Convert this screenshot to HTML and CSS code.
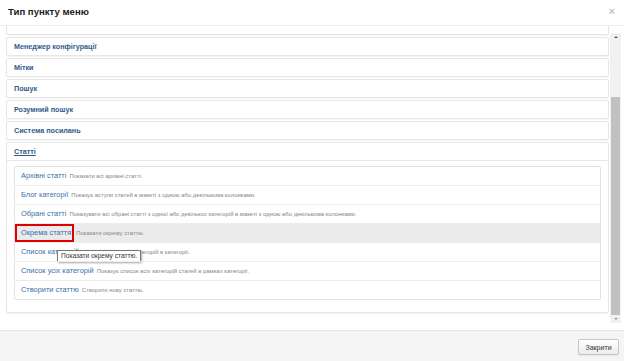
FILE: index.html
```html
<!DOCTYPE html>
<html lang="uk">
<head>
    <meta charset="UTF-8">
    <meta name="viewport" content="width=device-width, initial-scale=1.0">
    <title>Тип пункту меню</title>
    <link rel="stylesheet" href="styles.css">
</head>
<body>
    <div class="modal">
        <div class="modal-header">
            <h3>Тип пункту меню</h3>
            <a href="javascript:;" class="close" title="Закрити">&times;</a>
        </div>

        <div class="modal-body">
            <div class="accordion">
                <div class="panel panel-cut"></div>
                <div class="panel"><a href="javascript:;" class="panel-title">Менеджер конфігурації</a></div>
                <div class="panel"><a href="javascript:;" class="panel-title">Мітки</a></div>
                <div class="panel"><a href="javascript:;" class="panel-title">Пошук</a></div>
                <div class="panel"><a href="javascript:;" class="panel-title">Розумний пошук</a></div>
                <div class="panel"><a href="javascript:;" class="panel-title">Система посилань</a></div>
                <div class="panel open">
                    <a href="javascript:;" class="panel-title">Статті</a>
                    <div class="panel-body">
                        <ul class="types">
                            <li><a href="javascript:;">Архівні статті</a> <small>Показати всі архівні статті.</small></li>
                            <li><a href="javascript:;">Блог категорії</a> <small>Показує вступи статей в макеті з одною або декількома колонками.</small></li>
                            <li><a href="javascript:;">Обрані статті</a> <small>Показувати всі обрані статті з однієї або декількох категорій в макеті з одною або декількома колонками.</small></li>
                            <li class="hover"><a href="javascript:;" class="marked">Окрема стаття</a><small>Показати окрему статтю.</small></li>
                            <li>
                                <a href="javascript:;">Список категорій</a> <small>Показує список підкатегорій в категорії.</small>
                                <span class="tip">Показати окрему статтю.</span>
                            </li>
                            <li><a href="javascript:;">Список усіх категорій</a> <small>Показує список всіх категорій статей в рамках категорії.</small></li>
                            <li><a href="javascript:;">Створити статтю</a> <small>Створити нову статтю.</small></li>
                        </ul>
                    </div>
                </div>
            </div>

            <!-- смуга прокрутки -->
            <div class="scrollbar">
                <span class="arrow up"></span>
                <div class="track"><div class="thumb"></div></div>
                <span class="arrow down"></span>
            </div>
        </div>

        <div class="modal-footer">
            <button type="button" class="btn">Закрити</button>
        </div>
    </div>
</body>
</html>
```

FILE: styles.css
```css
*{padding:0px;margin:0px;box-sizing:border-box;}

ul, li{list-style:none;}

a{text-decoration:none;}

body{
    font-family:"Liberation Sans", Arial, sans-serif;
    background:#fff;
    color:#333;
}

.modal{
    width:624px;height:361px;
    display:flex;
    flex-direction:column;
}

/* шапка */
.modal-header{
    height:26px;
    border-bottom:1px solid #ececec;
    display:flex;
    align-items:center;
    justify-content:space-between;
    padding:0px 8px;
}
.modal-header h3{
    font-size:9.6px;
    font-weight:bold;
    color:#222;
    margin-top:-2px;
}
.close{
    font-size:11px;
    font-weight:bold;
    color:#c4c4c4;
    margin-top:-4px;
    margin-right:1px;
}

/* тіло */
.modal-body{
    flex:1;
    display:flex;
    padding:0px 3px 0px 6px;
    overflow:hidden;
}
.accordion{
    flex:1;
}
.panel{
    border:1px solid #e6e6e6;
    border-radius:2px;
    background:#fff;
    margin-bottom:2px;
    box-shadow:0 1px 1px rgba(0,0,0,.04);
}
.panel-cut{
    height:9px;
    border-top:none;
    border-radius:0 0 2px 2px;
}
.panel-title{
    display:block;
    height:17px;
    line-height:17px;
    padding:0px 7px;
    font-size:7.2px;
    font-weight:bold;
    color:#2f5b8b;
}
.open .panel-title{
    text-decoration:underline;
    border-bottom:1px solid #e6e6e6;
    height:18px;
}
.panel-body{
    padding:5px 7px 12px 7px;
}

/* список типів */
.types{
    border:1px solid #e2e2e2;
    border-radius:2px;
}
.types li{
    height:19px;
    font-size:7.4px;
    line-height:18px;
    border-top:1px solid #ececec;
    white-space:nowrap;
    position:relative;
}
.types li:first-child{
    height:18px;
    border-top:none;
}
.types li.hover{
    background:#ebebeb;
}
.types a{
    display:inline-block;
    vertical-align:top;
    height:18px;
    padding:0px 1px 0px 6px;
    color:#3a6ea6;
}
.types a.marked{
    outline:2px solid #e00000;
    outline-offset:-2px;
    padding-right:3px;
    margin-right:2px;
}
.types small{
    font-size:5.9px;
    color:#858585;
}
.tip{
    position:absolute;
    left:42px;top:7px;
    height:12px;
    line-height:10px;
    padding:0px 3px;
    font-size:6.6px;
    color:#333;
    background:#fff;
    border:1px solid #777;
    box-shadow:1px 1px 2px rgba(0,0,0,.35);
}

/* смуга прокрутки */
.scrollbar{
    width:11px;
    margin:7px 0px 7px 1px;
    display:flex;
    flex-direction:column;
    background:#f1f1f1;
}
.arrow{
    height:8px;
    display:flex;
    align-items:center;
    justify-content:center;
}
.arrow::before{
    content:"";
    border-left:2px solid transparent;
    border-right:2px solid transparent;
}
.arrow.up::before{border-bottom:2px solid #555;}
.arrow.down::before{border-top:2px solid #999;}
.track{
    flex:1;
    display:flex;
    flex-direction:column;
    padding:56px 1px 0px 1px;
}
.thumb{
    flex:1;
    background:#c1c1c1;
}

/* підвал */
.modal-footer{
    height:31px;
    border-top:1px solid #e6e6e6;
    background:#f5f5f5;
    display:flex;
    justify-content:flex-end;
    padding:8px 5px 0px 0px;
}
.btn{
    width:41px;height:16px;
    font-family:"Liberation Sans", Arial, sans-serif;
    font-size:7px;
    color:#333;
    background:linear-gradient(#fff, #ececec);
    border:1px solid #c5c5c5;
    border-radius:2px;
    box-shadow:0 1px 1px rgba(0,0,0,.06);
}
```
